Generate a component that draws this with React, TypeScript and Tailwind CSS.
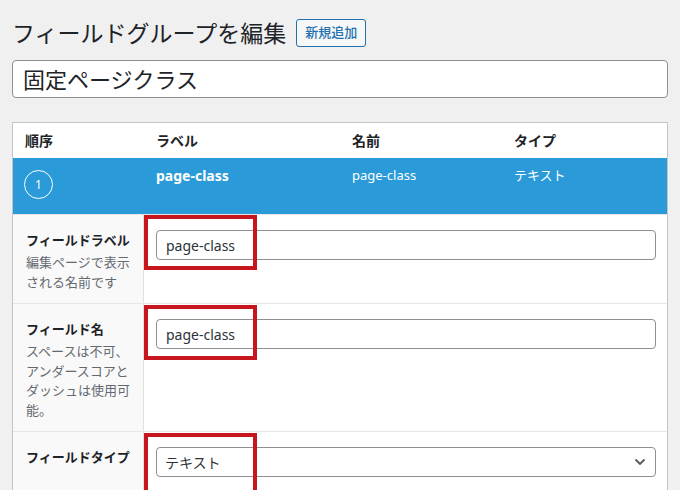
const font = "font-['Noto_Sans','Noto_Sans_CJK_JP',sans-serif]";

function Highlight({ top, height }: { top: number; height: number }) {
  return (
    <div
      className="pointer-events-none absolute left-[131px] w-[113px] border-4 border-[#c4161c]"
      style={{ top, height }}
    />
  );
}

function FieldRow({
  label,
  desc,
  height,
  children,
}: {
  label: string;
  desc?: string;
  height: string;
  children: React.ReactNode;
}) {
  return (
    <div className={`flex border-t border-[#e6e6e6] ${height}`}>
      <div className="w-[131px] shrink-0 border-r border-[#e1e1e1] bg-[#f9f9f9] pl-[13px] pt-[15px]">
        <div className="text-[13px] font-bold leading-[20px] text-[#1d2327]">{label}</div>
        {desc && (
          <div className="mt-[3px] w-[106px] text-[13px] leading-[19.5px] text-[#646970]">{desc}</div>
        )}
      </div>
      <div className="flex-1 pl-[12px] pr-[11px] pt-[15px]">{children}</div>
    </div>
  );
}

export default function App() {
  return (
    <div className={`h-[490px] w-[680px] overflow-hidden bg-[#f0f0f1] ${font}`}>
      <div className="flex items-center gap-[10px] pl-[12px] pt-[19px]">
        <h1 className="text-[23px] leading-[28px] text-[#1d2327]">フィールドグループを編集</h1>
        <button className="h-[28px] rounded-[3px] border border-[#2271b1] bg-[#f6f7f7] px-[8px] text-[13px] font-medium text-[#2271b1]">
          新規追加
        </button>
      </div>

      <div className="mx-[12px] mt-[13px] flex h-[38px] items-center rounded-[4px] border border-[#8c8f94] bg-white pl-[10px] text-[22px] text-[#1d2327]">
        固定ページクラス
      </div>

      <div className="relative mx-[12px] mt-[24px] border border-[#c3c4c7] bg-white">
        <div className="flex h-[35px] items-center text-[14px] font-bold text-[#1d2327]">
          <div className="w-[143px] pl-[12px]">順序</div>
          <div className="w-[196px]">ラベル</div>
          <div className="w-[162px]">名前</div>
          <div>タイプ</div>
        </div>

        <div className="flex h-[56px] bg-[#2a9bd8] text-[13px] text-white">
          <div className="w-[143px] pl-[11px] pt-[12px]">
            <div className="flex h-[29px] w-[29px] items-center justify-center rounded-full border-[1.5px] border-white text-[12px]">
              1
            </div>
          </div>
          <div className="w-[196px] pt-[7px] text-[14px] font-bold">page-class</div>
          <div className="w-[162px] pt-[8px]">page-class</div>
          <div className="pt-[8px]">テキスト</div>
        </div>

        <FieldRow label="フィールドラベル" desc="編集ページで表示される名前です" height="h-[89px]">
          <div className="flex h-[30px] items-center rounded-[4px] border border-[#8c8f94] pl-[9px] text-[14px] text-[#2c3338]">
            page-class
          </div>
        </FieldRow>

        <FieldRow
          label="フィールド名"
          desc="スペースは不可、アンダースコアとダッシュは使用可能。"
          height="h-[128px]"
        >
          <div className="flex h-[30px] items-center rounded-[4px] border border-[#8c8f94] pl-[9px] text-[14px] text-[#2c3338]">
            page-class
          </div>
        </FieldRow>

        <FieldRow label="フィールドタイプ" height="h-[80px]">
          <div className="flex h-[30px] items-center justify-between rounded-[4px] border border-[#8c8f94] pl-[8px] pr-[9px] text-[14px] text-[#2c3338]">
            <span>テキスト</span>
            <svg width="12" height="8" viewBox="0 0 12 8" fill="none">
              <path d="M1.5 1.5 L6 6 L10.5 1.5" stroke="#50575e" strokeWidth="1.8" />
            </svg>
          </div>
        </FieldRow>

        <Highlight top={92} height={55} />
        <Highlight top={182} height={55} />
        <Highlight top={310} height={70} />
      </div>
    </div>
  );
}
